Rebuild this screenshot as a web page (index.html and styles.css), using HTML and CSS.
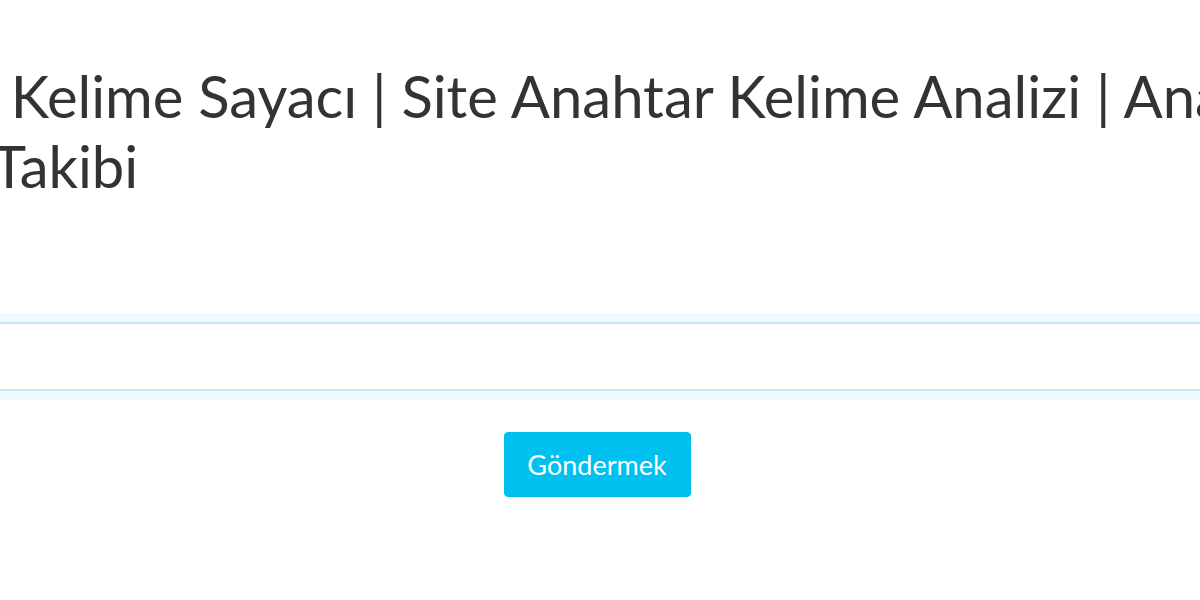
FILE: index.html
```html
<!DOCTYPE html>
<html lang="tr">
<head>
  <meta charset="UTF-8">
  <meta name="viewport" content="width=device-width, initial-scale=1.0">
  <title>Anahtar Kelime Sayacı</title>
  <link rel="stylesheet" href="styles.css">
</head>
<body>
  <div class="page">
    <h1 class="title">Anahtar Kelime Sayacı | Site Anahtar Kelime Analizi | Anahtar Kelime Sıralama<br>Takibi</h1>

    <form class="search-form" onsubmit="return false;">
      <input type="text" class="url-input" name="url">
      <div class="actions">
        <button type="submit" class="btn-send">Göndermek</button>
      </div>
    </form>
  </div>
</body>
</html>
```

FILE: styles.css
```css
body {
  margin: 0;
  overflow: hidden;
  background-color: #fff;
  font-family: Lato, "Open Sans", sans-serif;
}

.page {
  padding-top: 61px;
}

.title {
  margin: 0 0 0 -8px;
  font-size: 58px;
  line-height: 70px;
  font-weight: 400;
  color: #333;
  white-space: nowrap;
  text-indent: -198px; /* first word sits off screen */
}

.search-form {
  margin-top: 121px;
}

.url-input {
  display: block;
  box-sizing: border-box;
  width: calc(100% + 40px);
  height: 69px;
  margin: 0 -20px;
  border: 2px solid #c6e8f5;
  box-shadow: 0 0 0 9px #effaff;
  background-color: #fff;
  outline: none;
}

.actions {
  margin-top: 41px;
  padding-right: 6px;
  text-align: center;
}

.btn-send {
  width: 187px;
  height: 65px;
  border: 1px solid #00bdec;
  border-radius: 4px;
  background-color: #00c0ef;
  color: #fff;
  font-family: Lato, "Open Sans", sans-serif;
  font-size: 27px;
  cursor: pointer;
}
```
